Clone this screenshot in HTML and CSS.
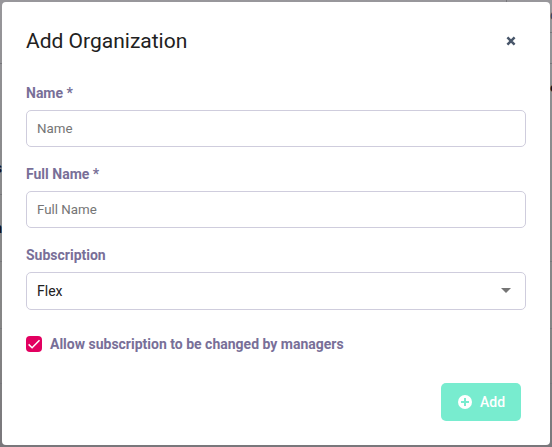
FILE: index.html
```html
<!DOCTYPE html>
<html lang="en">
<head>
<meta charset="utf-8">
<title>Add Organization</title>
<link rel="stylesheet" href="styles.css">
</head>
<body>
<div class="backdrop" aria-hidden="true">
  <span class="clip clip-s">s</span>
  <span class="clip clip-n">n</span>
  <span class="clip clip-c">c</span>
  <span class="clip clip-e">e</span>
</div>
<form class="modal">
  <header class="modal-header">
    <h1 class="title">Add Organization</h1>
    <button class="close" type="button" aria-label="Close">
      <svg width="10" height="10" viewBox="0 0 10 10"><path d="M1.4 1.4l7.2 7.2M8.6 1.4l-7.2 7.2" stroke="#48566a" stroke-width="2.5"/></svg>
    </button>
  </header>
  <label class="label" for="name">Name *</label>
  <input class="field" id="name" placeholder="Name">
  <label class="label" for="full">Full Name *</label>
  <input class="field" id="full" placeholder="Full Name">
  <span class="label">Subscription</span>
  <div class="field select">
    <span>Flex</span>
    <svg width="10" height="5" viewBox="0 0 10 5"><path d="M0 0h10L5 5z" fill="#757575"/></svg>
  </div>
  <div class="check-row">
    <span class="checkbox">
      <svg width="16" height="16" viewBox="0 0 16 16"><path d="M2.6 8.4l3.5 3.4 7.4-7.6" fill="none" stroke="#fff" stroke-width="1.5"/></svg>
    </span>
    <span class="check-label">Allow subscription to be changed by managers</span>
  </div>
  <footer class="modal-footer">
    <button class="add" type="button">
      <svg width="14" height="14" viewBox="0 0 14 14"><circle cx="7" cy="7" r="7" fill="#fff"/><path d="M7 3v8M3 7h8" stroke="#78eccf" stroke-width="2"/></svg>
      <span>Add</span>
    </button>
  </footer>
</form>
</body>
</html>
```
FILE: styles.css
```css
* { box-sizing: border-box; }
body {
  margin: 0;
  width: 552px;
  height: 447px;
  padding: 2px;
  overflow: hidden;
  position: relative;
  font-family: Roboto, "Liberation Sans", sans-serif;
  font-size: 14px;
  color: #212121;
}
.backdrop {
  position: absolute;
  inset: 0;
  overflow: hidden;
  background:
    linear-gradient(#77777b, #77777b) 0 63px / 2px 1px no-repeat,
    linear-gradient(#77777b, #77777b) 0 194px / 2px 1px no-repeat,
    linear-gradient(#77777b, #77777b) 0 261px / 100% 1px no-repeat,
    linear-gradient(#77777b, #77777b) 0 328px / 100% 1px no-repeat,
    linear-gradient(#77777b, #77777b) 0 383px / 100% 1px no-repeat,
    linear-gradient(#77777b, #77777b) 506px 0 / 1px 2px no-repeat,
    linear-gradient(#77777b, #77777b) 550px 32px / 2px 1px no-repeat,
    linear-gradient(#77777b, #77777b) 550px 63px / 2px 1px no-repeat,
    linear-gradient(#98979b 0, #8c8c8e 128px, #858585 330px, #79777b 100%);
}
.clip { position: absolute; font-weight: 700; line-height: 16px; color: #111122; }
.clip-s { right: 550px; top: 160px; }
.clip-n { right: 550px; top: 220px; }
.clip-c { left: 550px; top: 7px; font-weight: 400; color: #30405a; }
.clip-e { left: 550px; top: 80px; font-size: 13px; }
.modal {
  position: relative;
  display: flex;
  flex-direction: column;
  width: 548px;
  height: 443px;
  padding: 24px;
  border-radius: 4px;
  background: #fff;
}
.modal-header {
  display: flex;
  align-items: center;
  justify-content: space-between;
  height: 30px;
  margin-bottom: 27px;
}
.title { margin: 0; font-size: 21px; font-weight: 400; line-height: 30px; }
button { border: 0; font: inherit; }
.close { display: flex; width: 30px; height: 30px; padding: 0 0 1px; align-items: center; justify-content: center; background: none; }
.close svg { display: block; }
.label { height: 20px; margin-bottom: 7px; font-weight: 700; line-height: 20px; color: #786f98; }
.field {
  width: 100%;
  height: 37px;
  margin: 0 0 17px;
  padding: 0 10px;
  border: 1px solid #cfcddd;
  border-radius: 5px;
  background: #fff;
  font-family: inherit;
  font-size: 13.333px;
}
.field::placeholder { color: #757575; opacity: 1; }
.select {
  display: flex;
  align-items: center;
  justify-content: space-between;
  height: 38px;
  padding-right: 14px;
  margin-bottom: 26px;
  font-size: 14px;
}
.select svg { margin-bottom: 1px; }
.check-row { display: flex; align-items: center; gap: 8px; height: 16px; }
.checkbox { display: flex; width: 16px; height: 16px; border-radius: 4px; background: #e20060; }
.check-label { font-weight: 700; line-height: 16px; color: #786f98; }
.modal-footer { display: flex; justify-content: flex-end; margin-top: 31px; padding-right: 5px; }
.add {
  display: flex;
  align-items: center;
  justify-content: center;
  gap: 8px;
  width: 80px;
  height: 38px;
  padding: 0 0 0 1px;
  border-radius: 5px;
  background: #78eccf;
  color: #fff;
  font-size: 14px;
  font-weight: 500;
}
```
